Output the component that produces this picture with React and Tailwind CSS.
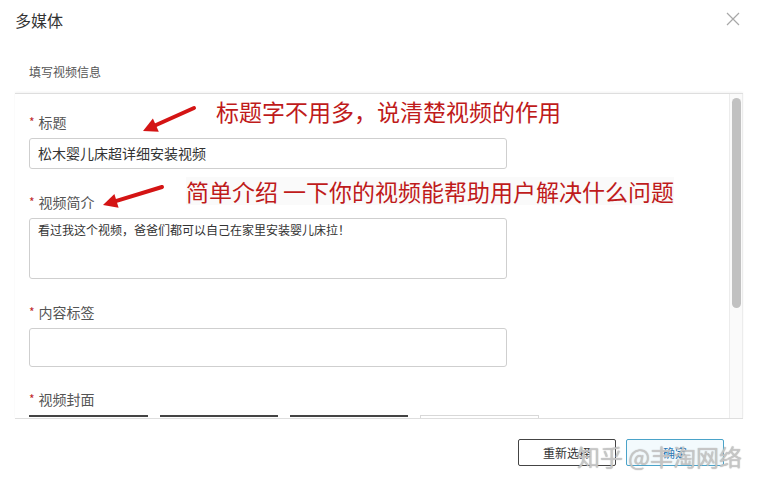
import React from "react";

const FONT = { fontFamily: '"Noto Sans CJK SC", "Noto Sans", sans-serif' };

function Label({ children }) {
  return (
    <div className="h-[20px] flex items-center text-[14px] leading-[20px] text-[#555]">
      <span className="text-[#c0292b] text-[12px] mr-[4px] leading-none">*</span>
      <span>{children}</span>
    </div>
  );
}

export default function App() {
  return (
    <div className="relative w-[760px] h-[488px] bg-white overflow-hidden" style={FONT}>
      {/* Header */}
      <div className="flex items-start justify-between pl-[15px] pr-[20px] pt-[9px]">
        <div className="text-[16px] leading-[22px] text-[#333]">多媒体</div>
        <svg width="14" height="14" viewBox="0 0 14 14" className="mt-[3px]">
          <path d="M1 1 L13 13 M13 1 L1 13" stroke="#a8a8a8" strokeWidth="1.2" fill="none" />
        </svg>
      </div>
      <div className="pl-[29px] mt-[33px] text-[12px] leading-[16px] text-[#555]">填写视频信息</div>

      {/* Scroll panel */}
      <div className="mt-[13px] ml-[15px] w-[728px] h-[326px] border-t border-b border-[#dedede] shadow-[0_-1px_2px_rgba(0,0,0,0.05)] flex">
        <div className="flex-1 overflow-hidden pl-[14px] pt-[18px]">
          <Label>标题</Label>
          <div className="mt-[6px] w-[478px] h-[31px] border border-[#cfcfcf] rounded-[3px] flex items-center px-[8px] text-[14px] text-[#333]">
            松木婴儿床超详细安装视频
          </div>
          <div className="mt-[23px]">
            <Label>视频简介</Label>
          </div>
          <div className="mt-[6px] w-[478px] h-[61px] border border-[#cfcfcf] rounded-[3px] px-[8px] pt-[2px] text-[12px] leading-[18px] text-[#333]">
            看过我这个视频，爸爸们都可以自己在家里安装婴儿床拉！
          </div>
          <div className="mt-[23px]">
            <Label>内容标签</Label>
          </div>
          <div className="mt-[6px] w-[478px] h-[39px] border border-[#cfcfcf] rounded-[3px]" />
          <div className="mt-[22px]">
            <Label>视频封面</Label>
          </div>
          <div className="mt-[6px] flex gap-[12px]">
            <div className="w-[119px] h-[60px] border-t-[2px] border-[#444] bg-white" />
            <div className="w-[118px] h-[60px] border-t-[2px] border-[#444] bg-white" />
            <div className="w-[118px] h-[60px] border-t-[2px] border-[#444] bg-white" />
            <div className="w-[119px] h-[60px] border border-[#d8d8d8] bg-white" />
          </div>
        </div>
        {/* Scrollbar */}
        <div className="w-[14px] h-full border-l border-r border-[#ececec] bg-[#fafafa] pt-[4px] flex justify-center">
          <div className="w-[9px] h-[210px] rounded-full bg-[#c1c1c1]" />
        </div>
      </div>

      {/* Footer */}
      <div className="mt-[20px] flex justify-end pr-[36px] gap-[10px]">
        <button className="w-[98px] h-[27px] border border-[#444] rounded-[2px] bg-white text-[12px] text-[#333] flex items-center justify-center">
          重新选择
        </button>
        <button className="w-[98px] h-[27px] border border-[#4aa3c9] rounded-[2px] bg-[#f3fafd] text-[12px] text-[#2a78b5] flex items-center justify-center">
          确定
        </button>
      </div>

      {/* Annotations */}
      <div className="absolute left-[216px] top-[97px] text-[23px] leading-[28px] text-[#bf1b1b] whitespace-nowrap">
        标题字不用多，说清楚视频的作用
      </div>
      <div className="absolute left-[186px] top-[177px] text-[23px] leading-[28px] text-[#bf1b1b] whitespace-nowrap bg-[#f7f7f7]/60">
        简单介绍<span className="inline-block w-[5px]" />一下你的视频能帮助用户解决什么问题
      </div>
      <svg className="absolute left-0 top-0 pointer-events-none" width="760" height="488">
        <line x1="194" y1="108" x2="155.5" y2="125.3" stroke="#d41414" strokeWidth="4" strokeLinecap="round" />
        <polygon points="143,131 158.8,131.8 152.9,118.6" fill="#d41414" />
        <line x1="162" y1="187" x2="116.5" y2="200.9" stroke="#d41414" strokeWidth="4" strokeLinecap="round" />
        <polygon points="103,205 118.6,207.8 114.4,193.9" fill="#d41414" />
      </svg>

      {/* Watermark */}
      <div
        className="absolute left-[577px] top-[441px] text-[23px] leading-[30px] text-[#d0d0d0]/80 whitespace-nowrap"
        style={{ textShadow: "0 0 1px #999" }}
      >
        知乎 @丰淘网络
      </div>
    </div>
  );
}
